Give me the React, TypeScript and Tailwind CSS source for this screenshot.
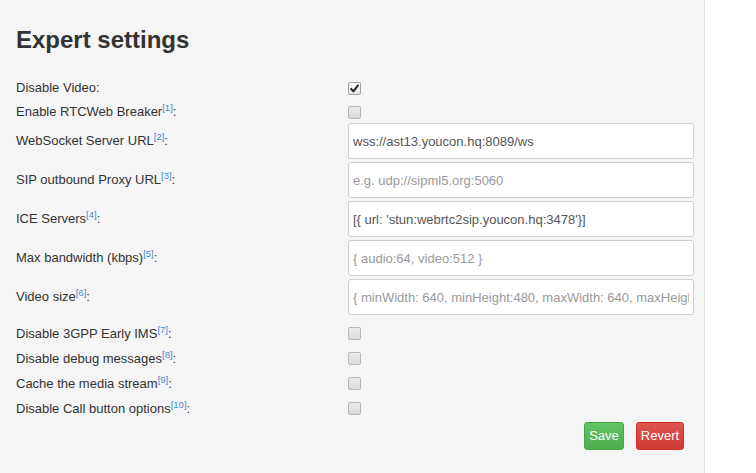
import type { ReactNode } from "react";

type Row =
  | { kind: "check"; label: string; note?: number; checked?: boolean }
  | { kind: "text"; label: string; note: number; value?: string; placeholder?: string };

const font = { fontFamily: '"Liberation Sans", Arial, sans-serif' };

function Label({ text, note }: { text: string; note?: number }) {
  return (
    <span className="relative -top-[1px] text-[13px] text-[#333]">
      {text}
      {note !== undefined && (
        <sup className="relative -top-[5px] text-[9.5px] text-[#428bca]">[{note}]</sup>
      )}
      :
    </span>
  );
}

function Box({ checked }: { checked?: boolean }) {
  if (checked) {
    return (
      <span className="flex h-[13px] w-[13px] items-center justify-center rounded-[2px] border border-[#a0a0a0] bg-gradient-to-b from-[#fdfdfd] to-[#e4e4e4]">
        <svg viewBox="0 0 10 10" className="h-[9px] w-[9px]">
          <path d="M1.2 5.4 L3.8 8.2 L8.8 1.6" fill="none" stroke="#222" strokeWidth="2.2" strokeLinecap="round" strokeLinejoin="round" />
        </svg>
      </span>
    );
  }
  return (
    <span className="block h-[13px] w-[13px] rounded-[2px] border border-[#b8b8b8] bg-gradient-to-b from-[#ececec] to-[#dadada]" />
  );
}

function Line({ children, label, h }: { children: ReactNode; label: ReactNode; h: string }) {
  return (
    <div className={`grid grid-cols-[332px_346px] items-center ${h}`}>
      <div>{label}</div>
      <div>{children}</div>
    </div>
  );
}

const top: Row[] = [
  { kind: "check", label: "Disable Video", checked: true },
  { kind: "check", label: "Enable RTCWeb Breaker", note: 1 },
];

const inputs: Row[] = [
  { kind: "text", label: "WebSocket Server URL", note: 2, value: "wss://ast13.youcon.hq:8089/ws" },
  { kind: "text", label: "SIP outbound Proxy URL", note: 3, placeholder: "e.g. udp://sipml5.org:5060" },
  { kind: "text", label: "ICE Servers", note: 4, value: "[{ url: 'stun:webrtc2sip.youcon.hq:3478'}]" },
  { kind: "text", label: "Max bandwidth (kbps)", note: 5, placeholder: "{ audio:64, video:512 }" },
  {
    kind: "text",
    label: "Video size",
    note: 6,
    placeholder: "{ minWidth: 640, minHeight:480, maxWidth: 640, maxHeight:480 }",
  },
];

const bottom: Row[] = [
  { kind: "check", label: "Disable 3GPP Early IMS", note: 7 },
  { kind: "check", label: "Disable debug messages", note: 8 },
  { kind: "check", label: "Cache the media stream", note: 9 },
  { kind: "check", label: "Disable Call button options", note: 10 },
];

export default function App() {
  return (
    <div className="flex h-[473px] w-[756px] bg-white" style={font}>
      <div className="h-full w-[705px] border-r border-[#e2e2e2] bg-[#f5f5f5] px-4">
        <h2 className="pt-[27px] text-[24px] font-bold leading-[26px] text-[#333]">Expert settings</h2>

        <div className="mt-[23px]">
          {top.map((r, i) => (
            <Line key={r.label} label={<Label text={r.label} note={r.note} />} h={i === 0 ? "h-[24px]" : "h-[23px]"}>
              <Box checked={r.kind === "check" && r.checked} />
            </Line>
          ))}
        </div>

        <div className="flex flex-col gap-[3px]">
          {inputs.map((r) =>
            r.kind === "text" ? (
              <Line key={r.label} label={<Label text={r.label} note={r.note} />} h="h-[36px]">
                <input
                  readOnly
                  value={r.value ?? ""}
                  placeholder={r.placeholder}
                  className="h-[36px] w-[346px] rounded-[3px] border border-[#cfcfcf] bg-white px-[4px] text-[13px] text-[#555] outline-none placeholder:text-[#999]"
                />
              </Line>
            ) : null,
          )}
        </div>

        <div className="mt-[6px]">
          {bottom.map((r) => (
            <Line key={r.label} label={<Label text={r.label} note={r.note} />} h="h-[25px]">
              <Box />
            </Line>
          ))}
        </div>

        <div className="mt-[1px] flex w-[668px] justify-end gap-[12px]">
          <button className="h-[28px] w-[40px] rounded-[3px] border border-[#47a447] bg-gradient-to-b from-[#62c462] to-[#4cae4c] text-[13px] text-white">
            Save
          </button>
          <button className="h-[28px] w-[48px] rounded-[3px] border border-[#c9302c] bg-gradient-to-b from-[#e0534f] to-[#cf3b37] text-[13px] text-white">
            Revert
          </button>
        </div>
      </div>
    </div>
  );
}
